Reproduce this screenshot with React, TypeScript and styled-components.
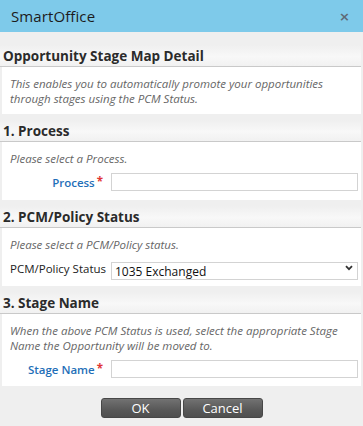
import React from "react";
import styled, { createGlobalStyle } from "styled-components";

const Global = createGlobalStyle`
  html, body { margin: 0; padding: 0; background: #efefef; }
  body { font-family: "Open Sans", "DejaVu Sans", sans-serif; color: #333; }
  * { box-sizing: border-box; }
`;

const Dialog = styled.div`
  width: 363px;
  height: 426px;
  background: #efefef;
  display: flex;
  flex-direction: column;
`;

const TitleBar = styled.div`
  height: 32px;
  background: #7ecaea;
  display: flex;
  align-items: center;
  justify-content: space-between;
  padding: 0 13px 0 11px;
`;

const Title = styled.div`
  font-size: 15px;
  color: #1c1c1c;
  letter-spacing: 0.1px;
`;

const Close = styled.button`
  border: none;
  background: none;
  padding: 0;
  font-size: 13px;
  font-weight: 700;
  color: #5f6b75;
  line-height: 1;
  cursor: pointer;
  font-family: "DejaVu Sans", sans-serif;
`;

const Body = styled.div`
  padding: 13px 2px 0 2px;
  display: flex;
  flex-direction: column;
  gap: 6px;
`;

const Section = styled.section`
  display: flex;
  flex-direction: column;
`;

const Header = styled.div`
  height: 22px;
  padding: 0 0 0 3px;
  display: flex;
  align-items: center;
  margin-left: -2px;
  font-size: 13.5px;
  font-weight: 700;
  color: #2b2b2b;
  background: linear-gradient(#efefef, #f8f8f8 55%, #f1f1f1);
  border-bottom: 1px solid #c9c9c9;
`;

const Content = styled.div<{ $pt?: number; $pb?: number }>`
  background: #fff;
  padding: ${(p) => p.$pt ?? 9}px 3px ${(p) => p.$pb ?? 9}px 8px;
  display: flex;
  flex-direction: column;
  gap: 7px;
`;

const Desc = styled.p`
  margin: 0;
  font-size: 11.5px;
  line-height: 15px;
  font-style: italic;
  color: #666;
`;

const Row = styled.div`
  display: grid;
  grid-template-columns: 93px 1fr;
  column-gap: 8px;
  align-items: center;
`;

const Label = styled.label<{ $required?: boolean }>`
  text-align: right;
  font-size: 11.5px;
  white-space: nowrap;
  color: ${(p) => (p.$required ? "#1f6fb8" : "#222")};
  font-weight: ${(p) => (p.$required ? 600 : 400)};
`;

const Star = styled.span`
  color: #e03535;
  font-weight: 700;
  margin-left: 2px;
  position: relative;
  top: -1px;
`;

const TextInput = styled.input`
  height: 18px;
  width: 100%;
  border: 1px solid #d3d3d3;
  background: #fff;
  font-family: inherit;
  font-size: 12px;
  padding: 0 4px;
  outline: none;
`;

const SelectWrap = styled.div`
  position: relative;
  height: 18px;
`;

const Select = styled.select`
  appearance: none;
  -webkit-appearance: none;
  width: 100%;
  height: 18px;
  border: 1px solid #d3d3d3;
  background: #fff;
  font-family: inherit;
  font-size: 12px;
  color: #111;
  padding: 0 18px 0 3px;
  outline: none;
`;

const Chevron = styled.svg`
  position: absolute;
  right: 5px;
  top: 6px;
  pointer-events: none;
`;

const Buttons = styled.div`
  display: flex;
  justify-content: center;
  gap: 2px;
  padding-top: 6px;
`;

const Button = styled.button`
  width: 80px;
  height: 20px;
  border: 1px solid #474747;
  border-radius: 3px;
  background: linear-gradient(#727272, #585858 60%, #4f4f4f);
  color: #fff;
  font-family: inherit;
  font-size: 13px;
  line-height: 18px;
  padding: 0;
  cursor: pointer;
`;

export default function App() {
  return (
    <>
      <Global />
      <Dialog>
        <TitleBar>
          <Title>SmartOffice</Title>
          <Close aria-label="Close">×</Close>
        </TitleBar>
        <Body>
          <Section>
            <Header>Opportunity Stage Map Detail</Header>
            <Content $pb={8}>
              <Desc>
                This enables you to automatically promote your opportunities
                through stages using the PCM Status.
              </Desc>
            </Content>
          </Section>
          <Section>
            <Header>1. Process</Header>
            <Content>
              <Desc>Please select a Process.</Desc>
              <Row>
                <Label $required>
                  Process<Star>*</Star>
                </Label>
                <TextInput />
              </Row>
            </Content>
          </Section>
          <Section>
            <Header>2. PCM/Policy Status</Header>
            <Content>
              <Desc>Please select a PCM/Policy status.</Desc>
              <Row>
                <Label>PCM/Policy Status</Label>
                <SelectWrap>
                  <Select defaultValue="1035">
                    <option value="1035">1035 Exchanged</option>
                  </Select>
                  <Chevron width="8" height="6" viewBox="0 0 8 6">
                    <path d="M1 1.2 L4 4.2 L7 1.2" fill="none" stroke="#333" strokeWidth="1.8" />
                  </Chevron>
                </SelectWrap>
              </Row>
            </Content>
          </Section>
          <Section>
            <Header>3. Stage Name</Header>
            <Content $pb={8}>
              <Desc>
                When the above PCM Status is used, select the appropriate Stage
                Name the Opportunity will be moved to.
              </Desc>
              <Row>
                <Label $required>
                  Stage Name<Star>*</Star>
                </Label>
                <TextInput />
              </Row>
            </Content>
          </Section>
          <Buttons>
            <Button>OK</Button>
            <Button>Cancel</Button>
          </Buttons>
        </Body>
      </Dialog>
    </>
  );
}
